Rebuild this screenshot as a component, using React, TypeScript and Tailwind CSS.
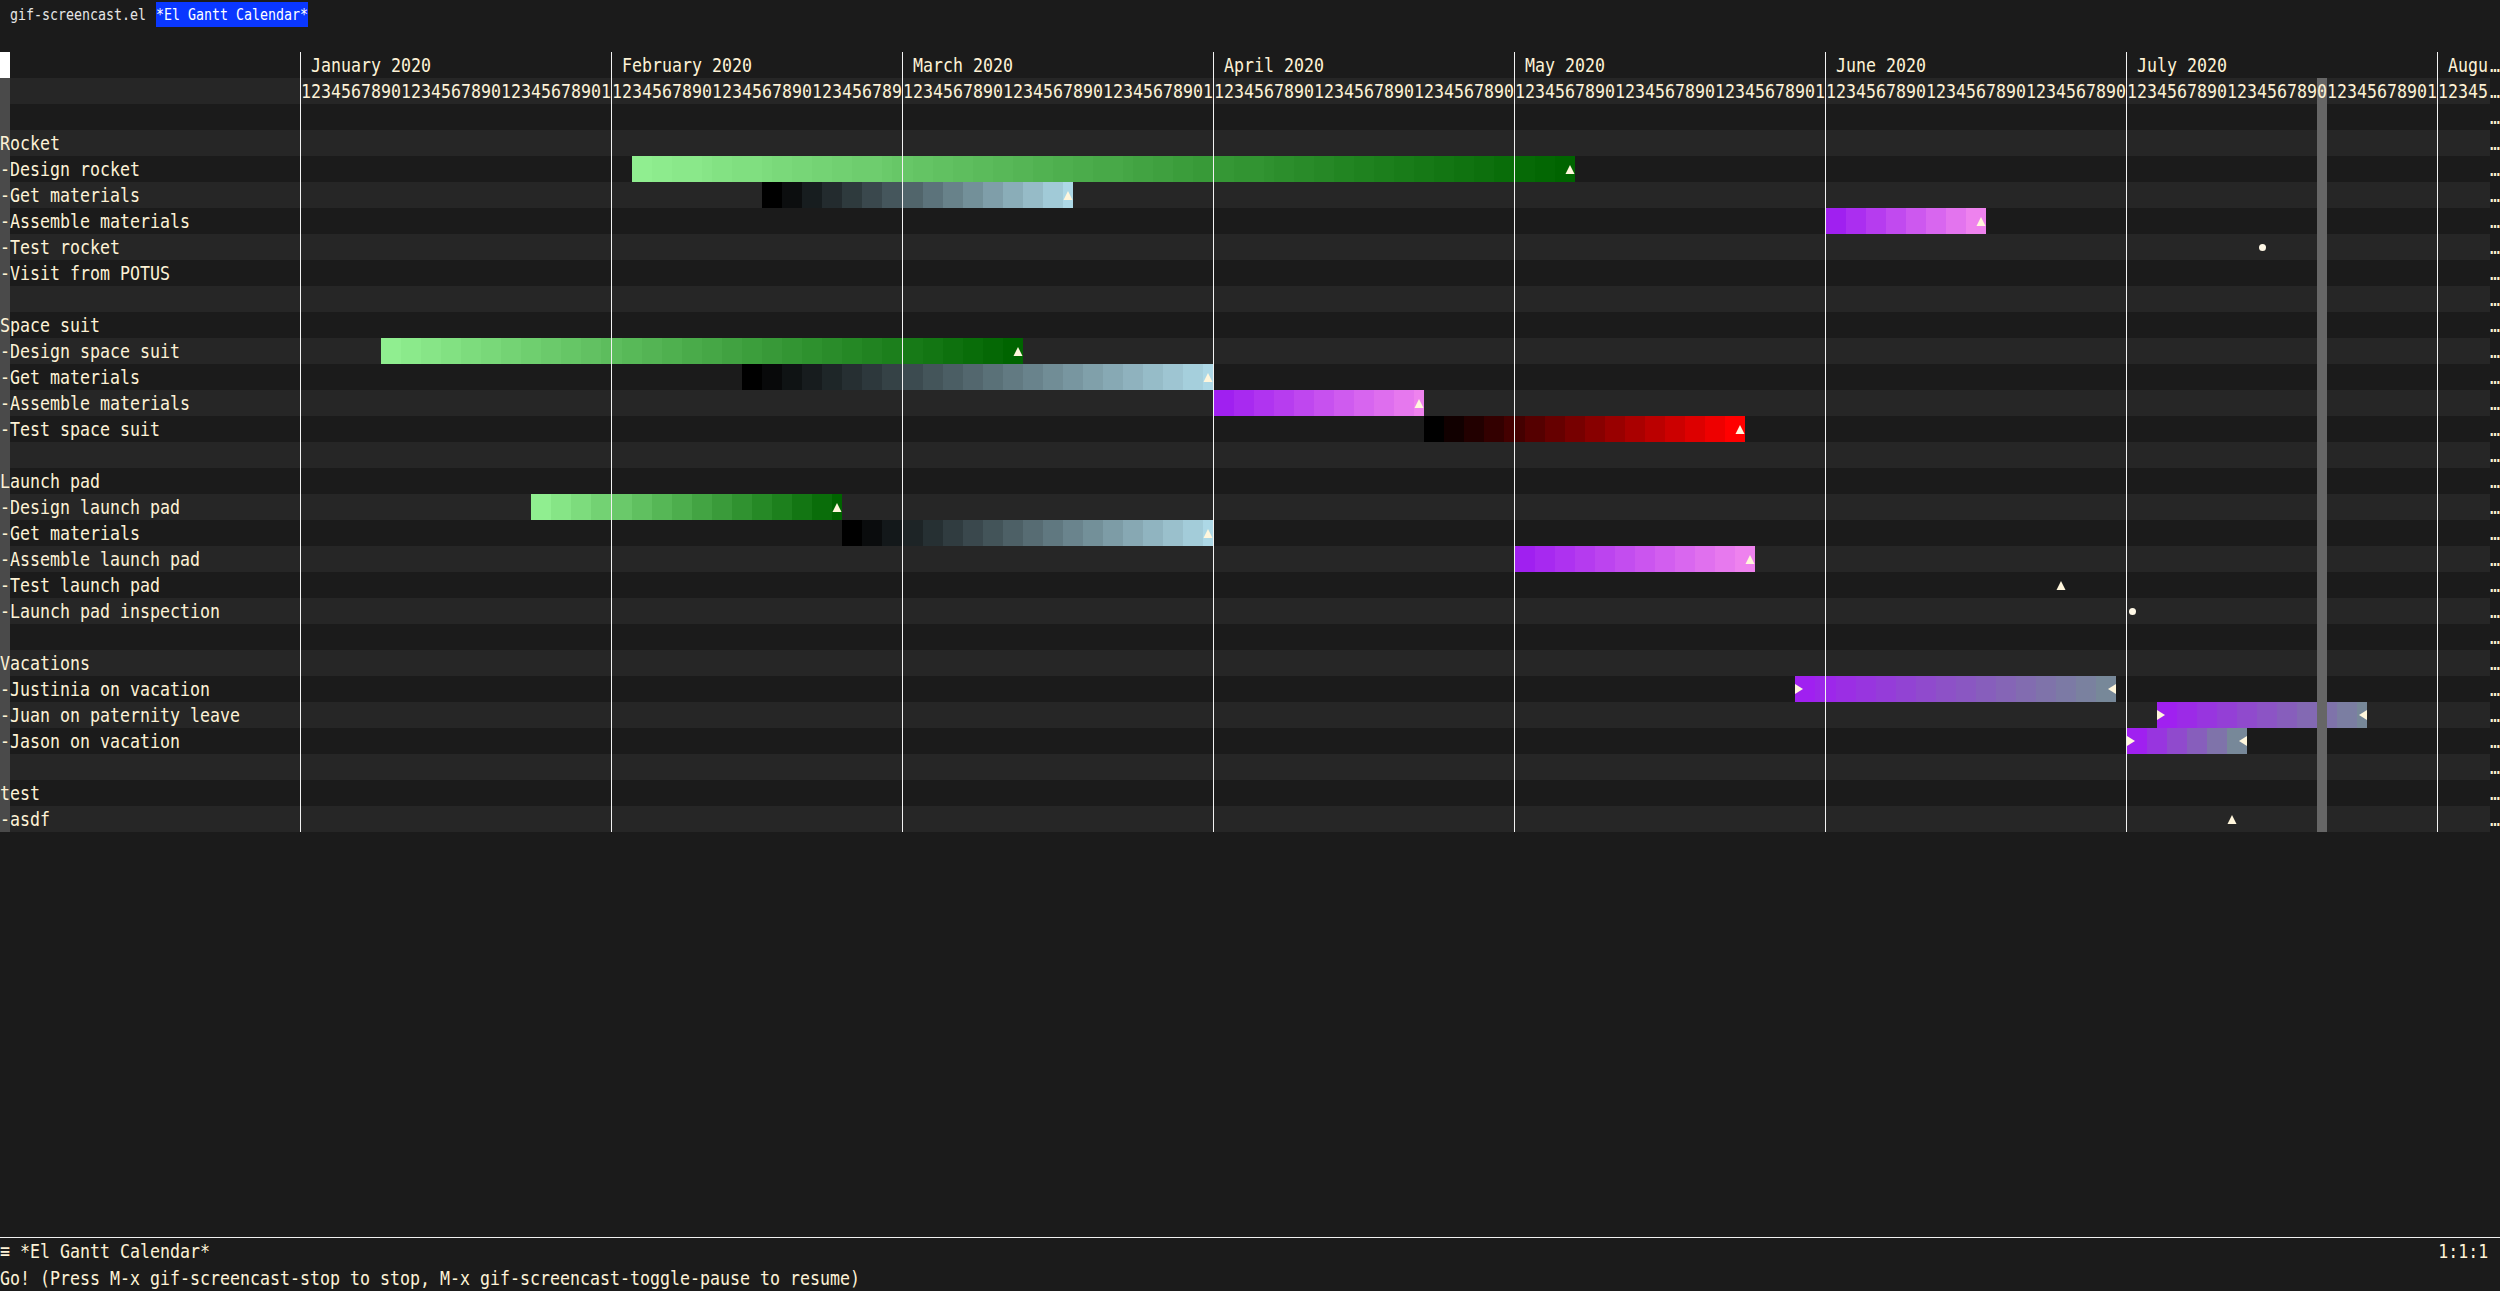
import React from 'react';

type RGB = [number, number, number];

const GRADS: Record<string, [RGB, RGB]> = {
  green: [[0x90, 0xee, 0x90], [0x00, 0x64, 0x00]],
  blue: [[0x00, 0x00, 0x00], [0xad, 0xd8, 0xe6]],
  purple: [[0xa0, 0x20, 0xf0], [0xee, 0x82, 0xee]],
  red: [[0x00, 0x00, 0x00], [0xff, 0x00, 0x00]],
  vac: [[0xa0, 0x20, 0xf0], [0x77, 0x88, 0x99]],
};

const MONTHS: { name: string; days: number }[] = [
  { name: ' January 2020', days: 31 },
  { name: ' February 2020', days: 29 },
  { name: ' March 2020', days: 31 },
  { name: ' April 2020', days: 30 },
  { name: ' May 2020', days: 31 },
  { name: ' June 2020', days: 30 },
  { name: ' July 2020', days: 31 },
  { name: ' Augu', days: 5 },
];

const OFFS: number[] = [];
{
  let acc = 0;
  for (const m of MONTHS) {
    OFFS.push(acc);
    acc += m.days;
  }
}
const g = (m: number, d: number) => OFFS[m - 1] + d - 1;
const TODAY = g(7, 20);

interface BarDef {
  from: number;
  to: number;
  grad: string;
  vac?: boolean;
}
interface RowDef {
  label: string;
  bar?: BarDef;
  tri?: number;
  dot?: number;
}

const ROWS: RowDef[] = [
  { label: '' },
  { label: '' },
  { label: '' },
  { label: 'Rocket' },
  { label: '-Design rocket', bar: { from: g(2, 3), to: g(5, 6), grad: 'green' } },
  { label: '-Get materials', bar: { from: g(2, 16), to: g(3, 17), grad: 'blue' } },
  { label: '-Assemble materials', bar: { from: g(6, 1), to: g(6, 16), grad: 'purple' } },
  { label: '-Test rocket', dot: g(7, 14) },
  { label: '-Visit from POTUS' },
  { label: '' },
  { label: 'Space suit' },
  { label: '-Design space suit', bar: { from: g(1, 9), to: g(3, 12), grad: 'green' } },
  { label: '-Get materials', bar: { from: g(2, 14), to: g(3, 31), grad: 'blue' } },
  { label: '-Assemble materials', bar: { from: g(4, 1), to: g(4, 21), grad: 'purple' } },
  { label: '-Test space suit', bar: { from: g(4, 22), to: g(5, 23), grad: 'red' } },
  { label: '' },
  { label: 'Launch pad' },
  { label: '-Design launch pad', bar: { from: g(1, 24), to: g(2, 23), grad: 'green' } },
  { label: '-Get materials', bar: { from: g(2, 24), to: g(3, 31), grad: 'blue' } },
  { label: '-Assemble launch pad', bar: { from: g(5, 1), to: g(5, 24), grad: 'purple' } },
  { label: '-Test launch pad', tri: g(6, 24) },
  { label: '-Launch pad inspection', dot: g(7, 1) },
  { label: '' },
  { label: 'Vacations' },
  { label: '-Justinia on vacation', bar: { from: g(5, 29), to: g(6, 29), grad: 'vac', vac: true } },
  { label: '-Juan on paternity leave', bar: { from: g(7, 4), to: g(7, 24), grad: 'vac', vac: true } },
  { label: '-Jason on vacation', bar: { from: g(7, 1), to: g(7, 12), grad: 'vac', vac: true } },
  { label: '' },
  { label: 'test' },
  { label: '-asdf', tri: g(7, 11) },
];

type Mark = 'tri' | 'dot' | 'right' | 'left' | null;

function mix(a: RGB, b: RGB, t: number) {
  const c = a.map((v, k) => Math.round(v + (b[k] - v) * t));
  return `rgb(${c[0]}, ${c[1]}, ${c[2]})`;
}

function cellInfo(row: RowDef, gi: number, ri: number): { bg?: string; mark: Mark } {
  let bg: string | undefined;
  let mark: Mark = null;
  const b = row.bar;
  if (b && gi >= b.from && gi <= b.to) {
    const n = b.to - b.from;
    // stepped gradient, like the reference's banded fill
    const steps = Math.max(1, Math.round((n + 1) / 2));
    const idx = Math.floor(((gi - b.from) / (n + 1)) * steps);
    const t = steps > 1 ? idx / (steps - 1) : 0;
    const [s, e] = GRADS[b.grad];
    bg = mix(s, e, t);
    if (b.vac) {
      if (gi === b.from) mark = 'right';
      else if (gi === b.to) mark = 'left';
    } else if (gi === b.to) {
      mark = 'tri';
    }
  }
  if (row.tri === gi) mark = 'tri';
  if (row.dot === gi) mark = 'dot';
  if (ri >= 1 && gi === TODAY) bg = '#666666';
  return { bg, mark };
}

const CREAM = '#fff6dc';

function Tri() {
  return (
    <svg width="10" height="9" viewBox="0 0 10 9" className="block">
      <polygon points="0.5,9 5,0 9.5,9" fill={CREAM} />
    </svg>
  );
}
function RightTri() {
  return (
    <svg width="8" height="10" viewBox="0 0 8 10" className="block">
      <polygon points="0,0 8,5 0,10" fill={CREAM} />
    </svg>
  );
}
function LeftTri() {
  return (
    <svg width="8" height="10" viewBox="0 0 8 10" className="block">
      <polygon points="8,0 0,5 8,10" fill={CREAM} />
    </svg>
  );
}

function Txt({ t }: { t: string }) {
  return <span className="inline-block origin-left scale-x-[0.8305] whitespace-pre">{t}</span>;
}

function Label({ text, ri }: { text: string; ri: number }) {
  const first = text.slice(0, 1);
  const rest = text.slice(1);
  return (
    <div className="flex h-full w-[300px] shrink-0">
      <div
        className={`flex h-full w-[10px] shrink-0 justify-center ${ri === 0 ? 'bg-[#ffffff]' : 'bg-[#4a4a4a]'}`}
      >
        {first && <span className="inline-block scale-x-[0.8305] whitespace-pre">{first}</span>}
      </div>
      {rest && <Txt t={rest} />}
    </div>
  );
}

function Cell({ row, gi, ri, digit }: { row: RowDef; gi: number; ri: number; digit?: string }) {
  const info = cellInfo(row, gi, ri);
  let justify = 'justify-center';
  if (info.mark === 'right') justify = 'justify-start';
  if (info.mark === 'left') justify = 'justify-end';
  return (
    <div
      className={`flex h-full w-[10px] shrink-0 items-center ${justify}`}
      style={info.bg ? { backgroundColor: info.bg } : undefined}
    >
      {digit !== undefined && <span className="inline-block scale-x-[0.8305] whitespace-pre">{digit}</span>}
      {info.mark === 'tri' && <Tri />}
      {info.mark === 'right' && <RightTri />}
      {info.mark === 'left' && <LeftTri />}
      {info.mark === 'dot' && <div className="h-[7px] w-[7px] rounded-full bg-[#fff8e6]" />}
    </div>
  );
}

function GanttRow({ row, ri }: { row: RowDef; ri: number }) {
  const bg = ri % 2 === 0 ? 'bg-[#1b1b1b]' : 'bg-[#262626]';
  return (
    <div className="flex h-[26px] w-[2500px]">
      <div className={`flex h-full w-[2490px] shrink-0 ${bg}`}>
        <Label text={row.label} ri={ri} />
        {MONTHS.map((m, mi) =>
          ri === 0 ? (
            <div
              key={mi}
              className="flex h-full shrink-0 border-l border-[#f2f2f2]"
              style={{ width: m.days * 10 + 1 }}
            >
              <Txt t={m.name} />
            </div>
          ) : (
            <div key={mi} className="flex h-full shrink-0 border-l border-[#f2f2f2]">
              {Array.from({ length: m.days }, (_, d) => (
                <Cell
                  key={d}
                  row={row}
                  gi={OFFS[mi] + d}
                  ri={ri}
                  digit={ri === 1 ? String((d + 1) % 10) : undefined}
                />
              ))}
            </div>
          ),
        )}
      </div>
      <div className="flex h-full w-[10px] shrink-0 justify-center">
        <span className="inline-block scale-x-[0.8305] whitespace-pre">…</span>
      </div>
    </div>
  );
}

export default function App() {
  return (
    <div
      className="flex h-[1291px] w-[2500px] flex-col overflow-hidden bg-[#1b1b1b] font-['DejaVu_Sans_Mono',monospace] text-[20px] leading-[26px] text-[#fdf2d6]"
    >
      <div className="flex h-[52px] shrink-0 items-start pt-[2px] text-[16px] leading-[25px]">
        <div className="ml-[10px] h-[25px] w-[136px] shrink-0 text-[#e6e6e6]">
          <Txt t="gif-screencast.el" />
        </div>
        <div className="ml-[10px] h-[25px] w-[152px] shrink-0 bg-[#0a37ff] text-white">
          <Txt t="*El Gantt Calendar*" />
        </div>
      </div>
      <div className="flex flex-col">
        {ROWS.map((row, ri) => (
          <GanttRow key={ri} row={row} ri={ri} />
        ))}
      </div>
      <div className="mt-auto flex h-[27px] shrink-0 items-center justify-between border-t border-[#f0f0f0] pr-[12px]">
        <Txt t="≡ *El Gantt Calendar*" />
        <span className="inline-block origin-right scale-x-[0.8305] whitespace-pre">1:1:1</span>
      </div>
      <div className="flex h-[27px] shrink-0 items-center">
        <Txt t="Go! (Press M-x gif-screencast-stop to stop, M-x gif-screencast-toggle-pause to resume)" />
      </div>
    </div>
  );
}
